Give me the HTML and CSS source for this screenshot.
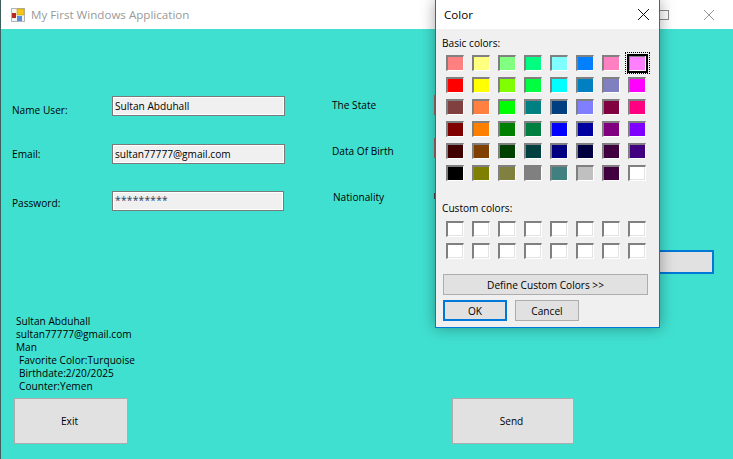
FILE: index.html
```html
<!DOCTYPE html>
<html lang="en">
<head>
    <meta charset="UTF-8">
    <meta name="viewport" content="width=device-width, initial-scale=1.0">
    <title>My First Windows Application</title>
    <link rel="stylesheet" href="styles.css">
</head>
<body>
    <div class="window">
        <header class="titlebar">
            <svg class="app-icon" width="14" height="14" viewBox="0 0 14 14">
                <rect x="0.5" y="0.5" width="13" height="13" fill="#f4f4f4" stroke="#b4b4b4"/>
                <rect x="6" y="1" width="7" height="6" fill="#f5c518" stroke="#c79a10" stroke-width="0.6"/>
                <rect x="1" y="5" width="4" height="5" fill="#b8281e"/>
                <rect x="6" y="8" width="5" height="5" fill="#5a8ee0"/>
            </svg>
            <span class="app-title">My First Windows Application</span>
            <div class="win-controls">
                <svg class="win-max" width="10" height="10" viewBox="0 0 10 10">
                    <rect x="0.5" y="0.5" width="9" height="9" fill="none" stroke="#8c8c8c"/>
                </svg>
                <svg class="win-close" width="10" height="10" viewBox="0 0 10 10">
                    <path d="M0 0L10 10M10 0L0 10" stroke="#9a9a9a" fill="none"/>
                </svg>
            </div>
        </header>

        <main class="form">
            <div class="fields">
                <div class="field-row field-name">
                    <label>Name User:</label>
                    <div class="textbox">Sultan Abduhall</div>
                </div>
                <div class="field-row field-email">
                    <label>Email:</label>
                    <div class="textbox">sultan77777@gmail.com</div>
                </div>
                <div class="field-row field-pass">
                    <label>Password:</label>
                    <div class="textbox textbox-pass">*********</div>
                </div>
            </div>

            <div class="side-labels">
                <span class="side-state">The State</span>
                <span class="side-birth">Data Of Birth</span>
                <span class="side-nation">Nationality</span>
            </div>

            <div class="output">
                <div>Sultan Abduhall</div>
                <div>sultan77777@gmail.com</div>
                <div>Man</div>
                <div class="indent">Favorite Color:Turquoise</div>
                <div class="indent">Birthdate:2/20/2025</div>
                <div class="indent">Counter:Yemen</div>
            </div>

            <div class="actions">
                <button class="action-btn">Exit</button>
                <button class="action-btn">Send</button>
            </div>

            <span class="behind behind-state"></span>
            <span class="behind behind-birth"></span>
            <span class="behind behind-nation"></span>
            <span class="behind-btn"></span>
        </main>

        <section class="dialog">
            <header class="dialog-title">
                <span>Color</span>
                <svg width="11" height="11" viewBox="0 0 11 11">
                    <path d="M0 0L11 11M11 0L0 11" stroke="#111" fill="none"/>
                </svg>
            </header>
            <div class="dialog-body">
                <div class="dialog-label">Basic colors:</div>
                <div class="swatches" id="basic"></div>
                <div class="dialog-label custom-label">Custom colors:</div>
                <div class="swatches swatches-custom" id="custom"></div>
                <button class="dlg-btn define-btn">Define Custom Colors &gt;&gt;</button>
                <div class="dlg-actions">
                    <button class="dlg-btn ok-btn">OK</button>
                    <button class="dlg-btn">Cancel</button>
                </div>
            </div>
        </section>
    </div>

    <script>
        // Basic colors of the dialog, row by row
        const basicColors = [
            "#ff8080", "#ffff80", "#80ff80", "#00ff80", "#80ffff", "#0080ff", "#ff80c0", "#ff80ff",
            "#ff0000", "#ffff00", "#80ff00", "#00ff40", "#00ffff", "#0080c0", "#8080c0", "#ff00ff",
            "#804040", "#ff8040", "#00ff00", "#008080", "#004080", "#8080ff", "#800040", "#ff0080",
            "#800000", "#ff8000", "#008000", "#008040", "#0000ff", "#0000a0", "#800080", "#8000ff",
            "#400000", "#804000", "#004000", "#004040", "#000080", "#000040", "#400040", "#400080",
            "#000000", "#808000", "#808040", "#808080", "#408080", "#c0c0c0", "#400040", "#ffffff"
        ];

        function addSwatches(holder, colors) {
            colors.forEach((color, i) => {
                const cell = document.createElement("span");
                cell.className = "swatch";
                cell.style.backgroundColor = color;
                if (holder.id === "basic" && i === 7) {
                    cell.classList.add("selected");
                }
                holder.appendChild(cell);
            });
        }

        addSwatches(document.getElementById("basic"), basicColors);
        addSwatches(document.getElementById("custom"), new Array(16).fill("#ffffff"));
    </script>
</body>
</html>
```

FILE: styles.css
```css
* {
    box-sizing: border-box;
}
html, body {
    margin: 0;
    padding: 0;
    overflow: hidden;
}
body {
    width: 733px;
    height: 459px;
    font-family: "Open Sans", "Liberation Sans", sans-serif;
    font-size: 10.15px;
    color: #000;
}
.window {
    position: relative;
    width: 733px;
    height: 459px;
    display: flex;
    flex-direction: column;
    background-color: #40e0d0;
    border-left: 1px solid #3f5f5c;
}
.titlebar {
    height: 29px;
    background-color: #fff;
    display: flex;
    align-items: center;
    padding-left: 10px;
    flex-shrink: 0;
}
.app-title {
    margin-left: 6px;
    font-size: 11.6px;
    color: #999;
}
.win-controls {
    margin-left: auto;
    display: flex;
    align-items: center;
    gap: 35px;
    padding-right: 19px;
}
.form {
    position: relative;
    flex: 1;
}
.fields {
    padding: 67px 0 0 11px;
}
.field-row {
    display: flex;
    align-items: flex-start;
    height: 48px;
}
.field-row label {
    width: 100px;
    padding-top: 7px;
}
.field-email {
    height: 47px;
}
.field-email label {
    padding-top: 3px;
}
.field-pass label {
    padding-top: 5px;
}
.textbox {
    width: 173px;
    height: 20px;
    padding: 2px;
    background-color: #f0f0f0;
    border: 1px solid #7a7a7a;
    box-shadow: inset 0 0 0 1px #fff;
    line-height: 14px;
}
.textbox-pass {
    width: 172px;
    line-height: 12px;
    letter-spacing: 0.3px;
    color: #1c3a5c;
}
.side-labels span {
    position: absolute;
    left: 331px;
}
.side-state {
    top: 69px;
}
.side-birth {
    top: 115px;
}
.side-labels .side-nation {
    top: 161px;
    left: 332px;
}
.output {
    padding: 76px 0 0 15px;
    line-height: 13px;
}
.indent {
    padding-left: 3px;
}
.actions {
    display: flex;
    gap: 324px;
    margin: 5px 0 0 13px;
}
.action-btn {
    width: 114px;
    height: 46px;
    padding: 0 3px 0 0;
    font: inherit;
    background-color: #e1e1e1;
    border: 1px solid #adadad;
}
.action-btn + .action-btn {
    width: 122px;
}
.behind {
    position: absolute;
    left: 433px;
    width: 2px;
    height: 20px;
    background-color: #9a6a6a;
}
.behind-state {
    top: 66px;
}
.behind-birth {
    top: 109px;
}
.behind-nation {
    top: 164px;
    height: 6px;
    background-color: #444;
}
.behind-btn {
    position: absolute;
    left: 640px;
    top: 221px;
    width: 73px;
    height: 24px;
    background-color: #e1e1e1;
    border: 2px solid #0078d7;
}
.dialog {
    position: absolute;
    left: 434px;
    top: 0;
    width: 225px;
    height: 328px;
    background-color: #f0f0f0;
    border: 1px solid #0078d7;
    border-top: none;
    box-shadow: 0 0 14px rgba(0, 0, 0, 0.35);
    display: flex;
    flex-direction: column;
}
.dialog-title {
    height: 29px;
    background-color: #fff;
    display: flex;
    align-items: center;
    justify-content: space-between;
    padding: 0 10px 0 8px;
    font-size: 11.6px;
    flex-shrink: 0;
}
.dialog-body {
    padding: 7px 0 0 6px;
}
.dialog-label {
    height: 16px;
    line-height: 15px;
}
.swatches {
    display: grid;
    grid-template-columns: repeat(8, 18px);
    grid-auto-rows: 16px;
    column-gap: 8px;
    row-gap: 6px;
    padding: 3px 0 0 4px;
}
.swatch {
    position: relative;
    border-top: 2px solid #808080;
    border-left: 2px solid #808080;
    border-right: 1px solid #fff;
    border-bottom: 1px solid #fff;
}
.selected::after {
    content: "";
    position: absolute;
    left: -3px;
    top: -3px;
    width: 17px;
    height: 15px;
    border: 2px solid #000;
}
.selected::before {
    content: "";
    position: absolute;
    left: -5px;
    top: -5px;
    width: 23px;
    height: 20px;
    border: 1px dotted #000;
}
.custom-label {
    margin-top: 20px;
}
.swatches-custom {
    padding-top: 4px;
}
.swatches-custom .swatch,
#basic .swatch:last-child {
    box-shadow: inset -1px -1px 0 #e3e3e3;
}
.dlg-btn {
    width: 64px;
    height: 21px;
    font: inherit;
    padding: 0;
    background-color: #e1e1e1;
    border: 1px solid #adadad;
}
.define-btn {
    display: block;
    width: 205px;
    margin: 15px 0 0 1px;
}
.dlg-actions {
    display: flex;
    gap: 8px;
    margin: 5px 0 0 1px;
}
.ok-btn {
    border: 2px solid #0078d7;
}
```
